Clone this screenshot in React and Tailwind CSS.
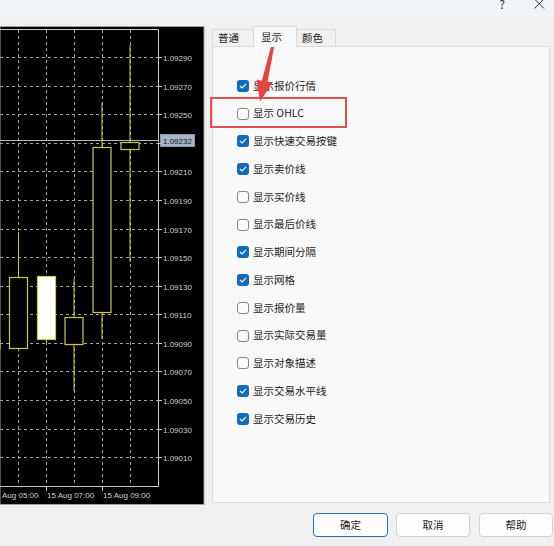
import React from "react";

const rows = [
  ["显示报价行情", true],
  ["显示 OHLC", false],
  ["显示快速交易按键", true],
  ["显示卖价线", true],
  ["显示买价线", false],
  ["显示最后价线", false],
  ["显示期间分隔", true],
  ["显示网格", true],
  ["显示报价量", false],
  ["显示实际交易量", false],
  ["显示对象描述", false],
  ["显示交易水平线", true],
  ["显示交易历史", true],
];

const prices = [
  "1.09290", "1.09270", "1.09250", "1.09230", "1.09210", "1.09190", "1.09170",
  "1.09150", "1.09130", "1.09110", "1.09090", "1.09070", "1.09050", "1.09030", "1.09010",
];

const Y = (k) => 57.2 + k * 28.57;
const Y_COLOR = "#c9c94a";

const candles = [
  { x: -18, top: 340, bot: 348, hi: 340, lo: 348, fill: "#000" },
  { x: 9.5, top: 277, bot: 348, hi: 232, lo: 348, fill: "#000" },
  { x: 37.5, top: 276, bot: 339, hi: 276, lo: 343, fill: "#fff" },
  { x: 65, top: 317, bot: 344, hi: 279, lo: 391, fill: "#000" },
  { x: 93, top: 147, bot: 312, hi: 103, lo: 339, fill: "#000" },
  { x: 121, top: 142, bot: 149, hi: 45, lo: 262, fill: "#000" },
];

function Chart() {
  const vx = [18.5, 46.5, 74.5, 102.5, 130.5];
  return (
    <svg width="205" height="479" viewBox="0 26 205 479" className="block">
      <rect x="0" y="26.5" width="204" height="478" fill="#000" stroke="#a0a0a0" strokeWidth="1" />
      {prices.map((p, k) => (
        <g key={p}>
          <line x1="0" x2="158" y1={Math.round(Y(k)) + 0.5} y2={Math.round(Y(k)) + 0.5} stroke="#a4a4a4" strokeDasharray="3 3" />
          <line x1="158" x2="162" y1={Math.round(Y(k)) + 0.5} y2={Math.round(Y(k)) + 0.5} stroke="#c8c8c8" />
          {k !== 3 && (
            <text x="163" y={Math.round(Y(k)) + 3.5} fill="#d0d0d0" fontSize="8" fontFamily="'Liberation Sans', Arial, sans-serif">
              {p}
            </text>
          )}
        </g>
      ))}
      {vx.map((x) => (
        <line key={x} x1={x} x2={x} y1="30" y2="486" stroke="#a4a4a4" strokeDasharray="3 3" />
      ))}
      <polyline points="0,29.5 158.5,29.5 158.5,486.5 0,486.5" fill="none" stroke="#c8c8c8" />
      <line x1="0" x2="158" y1="140.5" y2="140.5" stroke="#b8b8b8" />
      <rect x="160.5" y="134.5" width="34" height="12" fill="#a3b5c7" stroke="#c8d4e0" strokeWidth="0.5" />
      <text x="163" y="144" fill="#101820" fontSize="8" fontFamily="'Liberation Sans', Arial, sans-serif">1.09232</text>
      {candles.map((c, i) => {
        const cx = c.x + 9;
        return (
          <g key={i}>
            {c.hi < c.top && <line x1={cx} x2={cx} y1={c.hi} y2={c.top} stroke={Y_COLOR} />}
            {c.lo > c.bot && <line x1={cx} x2={cx} y1={c.bot} y2={c.lo} stroke={Y_COLOR} />}
            <rect x={c.x} y={c.top + 0.5} width="18" height={c.bot - c.top} fill={c.fill} stroke={Y_COLOR} strokeWidth="1.2" />
          </g>
        );
      })}
      <line x1="46.5" x2="46.5" y1="486" y2="491" stroke="#c8c8c8" />
      <line x1="102.5" x2="102.5" y1="486" y2="491" stroke="#c8c8c8" />
      <g fill="#d0d0d0" fontSize="8" fontFamily="'Liberation Sans', Arial, sans-serif">
        <text x="2" y="498">Aug 05:00</text>
        <text x="47" y="498">15 Aug 07:00</text>
        <text x="103" y="498">15 Aug 09:00</text>
      </g>
    </svg>
  );
}

function Checkbox({ checked }) {
  if (checked) {
    return (
      <span className="flex w-[12px] h-[12px] rounded-[3px] bg-[#0f6cbd] items-center justify-center shrink-0">
        <svg width="12" height="12" viewBox="0 0 12 12">
          <path d="M3.2 6.2 L5.1 8 L8.8 4.2" fill="none" stroke="#fff" strokeWidth="1.1" strokeLinecap="round" strokeLinejoin="round" />
        </svg>
      </span>
    );
  }
  return <span className="block w-[12px] h-[12px] rounded-[3px] border border-[#878787] bg-[#fbfbfb] shrink-0" />;
}

export default function App() {
  const font = { fontFamily: "'Noto Sans CJK SC', 'Noto Sans', sans-serif" };
  return (
    <div className="relative w-[554px] h-[546px] bg-[#f0f0f0] overflow-hidden flex flex-col text-[#1b1b1b]" style={font}>
      <div className="h-[18px] bg-[#eff2f7] flex justify-end items-start shrink-0">
        <span className="text-[12px] leading-[12px] -mt-[2px] text-[#333]">?</span>
        <svg width="11" height="10" viewBox="0 0 11 10" className="ml-[29px] mr-[9px] -mt-[1px]">
          <path d="M0.5 0 L10 9.5 M10 0 L0.5 9.5" stroke="#333" strokeWidth="1" />
        </svg>
      </div>

      <div className="flex h-[487px] shrink-0">
        <div className="mt-[8px]">
          <Chart />
        </div>
        <div className="ml-[7px] mt-[8px] w-[338px] flex flex-col">
          <div className="flex items-end h-[20px] text-[10.5px] leading-none">
            <div className="w-[41px] h-[17px] border-l border-t border-[#dadada] bg-[#f0f0f0] pl-[5px] flex items-center">普通</div>
            <div className="w-[44px] h-[21px] -mb-px border-x border-t border-[#dadada] bg-[#f9f9f9] pl-[7px] flex items-start pt-[5px] relative z-10">显示</div>
            <div className="w-[39px] h-[17px] border-r border-t border-[#dadada] bg-[#f0f0f0] pl-[5px] flex items-center">颜色</div>
          </div>
          <div className="h-[457px] border border-[#dadada] bg-[#f9f9f9] pt-[25px] pl-[24px] flex flex-col">
            {rows.map(([label, checked]) => (
              <div key={label} className="h-[27.75px] flex items-center gap-[4px]">
                <Checkbox checked={checked} />
                <span className="text-[10.5px] leading-none">{label}</span>
              </div>
            ))}
          </div>
        </div>
      </div>

      <div className="mt-[8px] flex justify-end pr-[1px] text-[10.5px]">
        <button className="w-[75px] h-[24px] rounded-[4px] border border-[#2a6fb8] bg-[#fdfdfd] mr-[8px]">确定</button>
        <button className="w-[74px] h-[24px] rounded-[4px] border border-[#d2d2d2] bg-[#fdfdfd] mr-[9px]">取消</button>
        <button className="w-[74px] h-[24px] rounded-[4px] border border-[#d2d2d2] bg-[#fdfdfd]">帮助</button>
      </div>

      <div className="absolute left-[210px] top-[97px] w-[137px] h-[31px] border-2 border-[#e25050]" />
      <svg className="absolute left-0 top-0 pointer-events-none" width="554" height="546">
        <polygon
          points="274.6,44.3 267.6,81.8 272.4,83 260,101.5 256.6,79.6 261.8,80.8 271.8,43.7"
          fill="#e4463f"
        />
      </svg>
    </div>
  );
}
